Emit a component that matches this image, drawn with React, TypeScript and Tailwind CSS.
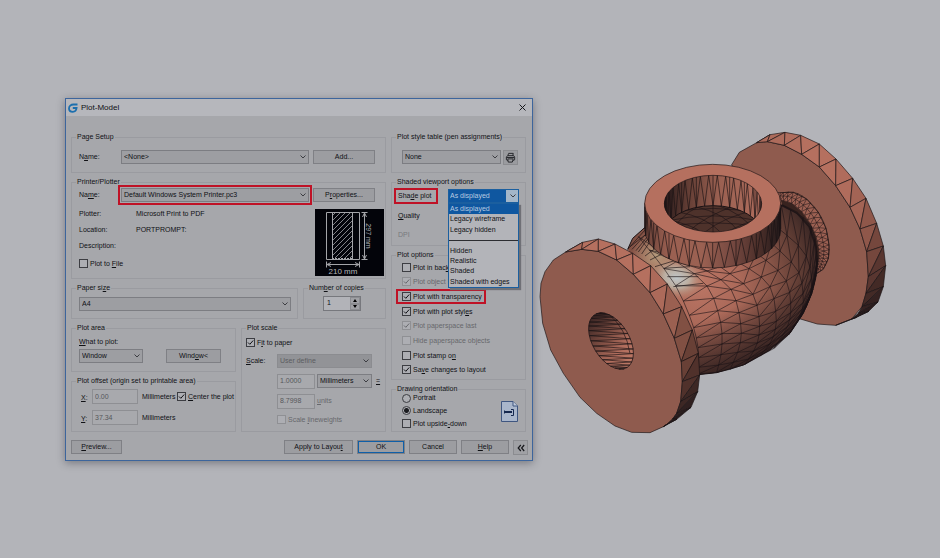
import React from 'react';

/* ---------- Text with keyboard mnemonics ---------- */

function Caption({ text }: { text: string }) {
  const at = text.indexOf('&');
  if (at < 0) return <>{text}</>;
  return (
    <>
      {text.slice(0, at)}
      <u className="underline-offset-1">{text[at + 1]}</u>
      {text.slice(at + 2)}
    </>
  );
}

/* ---------- Form controls ---------- */

function Group({ title, className = '', children }: { title: string; className?: string; children: React.ReactNode }) {
  return (
    <fieldset className={`min-w-0 border border-[#9a9ba0] ${className}`}>
      <legend className="ml-1 px-px leading-[10px]">
        <Caption text={title} />
      </legend>
      {children}
    </fieldset>
  );
}

function Chevron() {
  return (
    <svg viewBox="0 0 8 6" className="pointer-events-none absolute right-[2px] top-1 h-[6px] w-2 text-[#3c3d42]" fill="none" stroke="currentColor" strokeWidth="1">
      <path d="M1.500 1.500 4 4 6.500 1.500" />
    </svg>
  );
}

function Select({ id, label, value, className = '', disabled = false }: { id: string; label?: string; value: string; className?: string; disabled?: boolean }) {
  return (
    <span className={`relative block ${className}`}>
      <select
        id={id}
        aria-label={label}
        disabled={disabled}
        className="block h-[14px] w-full appearance-none border border-[#7c7d82] bg-[#9d9ea2] pl-[2px] pr-3 leading-3 disabled:border-[#8b8c90] disabled:bg-[#929397] disabled:text-[#5c5d61] disabled:opacity-100"
      >
        <option>{value}</option>
      </select>
      <Chevron />
    </span>
  );
}

function Button({ text, className = '' }: { text: string; className?: string }) {
  return (
    <button type="button" className={`h-[14px] shrink-0 border border-[#7f8085] bg-[#9c9da1] text-center leading-3 ${className}`}>
      <Caption text={text} />
    </button>
  );
}

function Check({ text, checked = false, disabled = false, className = '' }: { text: string; checked?: boolean; disabled?: boolean; className?: string }) {
  return (
    <label className={`flex items-center gap-[2px] whitespace-nowrap leading-[11px] ${disabled ? 'text-[#67686c]' : ''} ${className}`}>
      <span className="relative block size-[9px] shrink-0">
        <input
          type="checkbox"
          defaultChecked={checked}
          disabled={disabled}
          className={`block size-[9px] appearance-none border bg-[#adaeb3] ${disabled ? 'border-[#8f9094]' : 'border-[#3c3d42]'}`}
        />
        {checked && (
          <svg viewBox="0 0 9 9" className="pointer-events-none absolute inset-0 size-[9px]" fill="none" stroke="currentColor">
            <path d="M2 4.500 3.800 6.300 7.200 2.500" />
          </svg>
        )}
      </span>
      <span>
        <Caption text={text} />
      </span>
    </label>
  );
}

function Radio({ text, checked = false }: { text: string; checked?: boolean }) {
  return (
    <label className="flex items-center gap-[2px]">
      <input
        type="radio"
        name="orientation"
        defaultChecked={checked}
        className="size-[9px] appearance-none rounded-full border border-[#3c3d42] bg-[#adaeb3] checked:bg-[radial-gradient(circle,#1a1b1f_0_2px,#b0b1b6_3px)]"
      />
      <span>{text}</span>
    </label>
  );
}

function Field({ id, value, label, className = '' }: { id: string; value: string; label?: string; className?: string }) {
  return (
    <input
      id={id}
      aria-label={label}
      disabled
      defaultValue={value}
      className={`h-[15px] min-w-0 border border-[#8e8f93] bg-[#a8a9ad] pb-px pl-[2px] text-[#56575b] ${className}`}
    />
  );
}

/* ---------- Paper preview ---------- */

function PaperPreview() {
  return (
    <svg viewBox="0 0 69 67" className="h-[67px] w-[69px] shrink-0" role="img" aria-label="Paper preview">
      <defs>
        <clipPath id="sheet">
          <rect x="17" y="4" width="20" height="45" />
        </clipPath>
      </defs>
      <rect width="69" height="67" fill="#03040a" />
      <g fill="none" stroke="#a4a5a9" strokeWidth="1">
        <path d="M11.500 3.500H44.500V50.500H11.500ZM17.500 4V50M37.500 4V50" />
        <g clipPath="url(#sheet)">
          {Array.from({ length: 15 }, (_, i) => (
            <path key={i} d={`M16 ${8 + i * 5}L40 ${-16 + i * 5}`} strokeWidth="0.8" />
          ))}
        </g>
        <path d="M17 49.500H37" strokeDasharray="2 1" />
        <path d="M49.500 4V50M46.500 3.500H52.500M46.500 50.500H52.500M47.500 8 49.500 4 51.500 8M47.500 46 49.500 50 51.500 46" />
        <path d="M12 55.500H44M11.500 52.500V58.500M44.500 52.500V58.500M16 53.500 12 55.500 16 57.500M40 53.500 44 55.500 40 57.500" />
      </g>
      <text x="28" y="65" textAnchor="middle" fill="#b4b5b9" fontSize="8" fontFamily="Liberation Sans, sans-serif">210 mm</text>
      <text transform="translate(51 27) rotate(90)" textAnchor="middle" fill="#b4b5b9" fontSize="7" fontFamily="Liberation Sans, sans-serif">297 mm</text>
    </svg>
  );
}

/* ---------- Valve model ---------- */

type P = [number, number];

function curve(pts: P[], steps: number): P[] {
  const out: P[] = [];
  for (let s = 0; s <= steps; s++) {
    const u = (s / steps) * (pts.length - 1);
    const i = Math.min(Math.floor(u), pts.length - 2);
    const t = u - i;
    const [a, b, c, d] = [pts[Math.max(i - 1, 0)], pts[i], pts[i + 1], pts[Math.min(i + 2, pts.length - 1)]];
    const f = (k: 0 | 1) =>
      Math.round(0.5 * (2 * b[k] + (c[k] - a[k]) * t + (2 * a[k] - 5 * b[k] + 4 * c[k] - d[k]) * t * t + (3 * b[k] - a[k] - 3 * c[k] + d[k]) * t * t * t));
    out.push([f(0), f(1)]);
  }
  return out;
}

const line = (pts: P[]) => 'M' + pts.map((p) => p.join(' ')).join('L');

function lattice(rails: P[][]): string {
  let d = rails.map(line).join('');
  for (let j = 0; j < rails.length - 1; j++) {
    for (let i = 0; i < rails[j].length; i++) {
      d += line([rails[j][i], rails[j + 1][i]]);
      if (i + 1 < rails[j].length) d += line([rails[j][i + 1], rails[j + 1][i]]);
    }
  }
  return d;
}

function arc(cx: number, cy: number, rx: number, ry: number, from: number, to: number, n: number): P[] {
  return Array.from({ length: n + 1 }, (_, i) => {
    const a = ((from + ((to - from) * i) / n) * Math.PI) / 180;
    return [Math.round(cx + rx * Math.cos(a)), Math.round(cy + ry * Math.sin(a))];
  });
}

const backOuter: P[] = [[680, 68], [720, 44], [765, 37], [812, 46], [868, 72], [918, 117], [968, 175], [1008, 235], [1040, 310], [1060, 378], [1067, 437], [1060, 500], [1044, 546], [1016, 574], [980, 592]];
const backInner: P[] = [[680, 68], [712, 65], [763, 76], [815, 103], [868, 141], [917, 197], [960, 262], [990, 327], [1010, 395], [1015, 470], [1008, 520], [996, 560], [985, 580], [965, 597], [917, 616]];
const backShade = ['#ad6b5b', '#ad6b5b', '#b06d5d', '#b5705f', '#b5705f', '#b06c5c', '#a36455', '#8f574a', '#75473d', '#593630', '#432a26', '#352221', '#2b1c1c', '#281a1b'];

const frontOuter: P[] = [[107, 396], [158, 367], [205, 357], [255, 372], [308, 400], [362, 437], [412, 492], [455, 560], [487, 630], [505, 700], [509, 765], [503, 815], [483, 862], [440, 898], [400, 920]];
const frontInner: P[] = [[107, 396], [155, 388], [205, 394], [260, 420], [310, 463], [360, 518], [400, 582], [433, 655], [454, 725], [457, 785], [452, 845], [440, 880], [428, 897], [412, 912], [400, 920]];
const frontShade = ['#ad6b5b', '#b5705f', '#b5705f', '#b5705f', '#b5705f', '#ac6a5a', '#9b6051', '#815043', '#684036', '#50312b', '#3d2724', '#302020', '#291b1c', '#261a1a'];

function Rim({ outer, inner, shade }: { outer: P[]; inner: P[]; shade: string[] }) {
  return (
    <g stroke="#1b1315" strokeWidth="2" strokeLinejoin="round">
      {shade.map((c, i) => (
        <g key={i} fill={c}>
          <path d={line([outer[i], outer[i + 1], inner[i]]) + 'Z'} />
          <path d={line([inner[i], outer[i + 1], inner[i + 1]]) + 'Z'} />
        </g>
      ))}
    </g>
  );
}

const bodyRails: P[][] = (
  [
    [[325, 350], [430, 485], [485, 605], [505, 690], [505, 762]],
    [[400, 400], [524, 489], [568, 590], [576, 680], [560, 757]],
    [[500, 436], [597, 500], [630, 595], [630, 675], [600, 748]],
    [[570, 440], [664, 515], [688, 605], [680, 675], [645, 733]],
    [[630, 430], [715, 492], [738, 590], [728, 655], [690, 708]],
    [[680, 400], [765, 475], [782, 565], [770, 625], [732, 685]],
    [[725, 370], [803, 450], [820, 535], [808, 590], [775, 645]],
    [[745, 325], [825, 400], [845, 490], [835, 545], [812, 592]],
    [[754, 255], [840, 312], [861, 410], [857, 470], [845, 522]],
  ] as P[][]
).map((r) => curve(r, 11));

const neckRails: P[][] = (
  [
    [[750, 219], [790, 217], [830, 237], [865, 277], [888, 325], [897, 375], [895, 415], [880, 445], [858, 462]],
    [[751, 228], [785, 232], [820, 255], [852, 293], [872, 338], [881, 380], [880, 415], [870, 440], [857, 458]],
    [[752, 240], [785, 250], [815, 275], [841, 312], [858, 350], [866, 388], [867, 415], [862, 438], [856, 455]],
  ] as P[][]
).map((r) => curve(r, 24));

function Valve() {
  const skirtTop = arc(548, 250, 204, 117, 180, 0, 36);
  const skirtLow = arc(548, 327, 204, 117, 180, 0, 36);
  const boreTop = arc(549, 251, 146, 85, 180, 360, 36);
  const boreLow = arc(549, 342, 146, 85, 180, 360, 36);
  const left = arc(0, 0, 93, 55, 20, 200, 34);
  const right = arc(0, 0, 93, 55, 20, -160, 34);
  const zig = (a: P[], b: P[]) => line(a.map((p, i) => (i % 2 ? p : b[i])));
  return (
    <svg viewBox="9 0 1101 990" className="mr-10 mt-[22px] min-w-0 flex-1" role="img" aria-label="Shaded model of a flanged valve body">
      <defs>
        <radialGradient id="body" gradientUnits="userSpaceOnUse" cx="510" cy="490" r="400">
          <stop offset="0" stopColor="#bb7665" />
          <stop offset="0.300" stopColor="#ab6959" />
          <stop offset="0.550" stopColor="#875447" />
          <stop offset="0.780" stopColor="#5b3a32" />
          <stop offset="1" stopColor="#2a1d1e" />
        </radialGradient>
        <linearGradient id="under" gradientUnits="userSpaceOnUse" x1="590" y1="570" x2="670" y2="760">
          <stop offset="0" stopColor="#1c1315" stopOpacity="0" />
          <stop offset="1" stopColor="#1c1315" stopOpacity="0.850" />
        </linearGradient>
        <radialGradient id="shine" gradientUnits="userSpaceOnUse" cx="0" cy="0" r="1" gradientTransform="translate(440 474) rotate(10) scale(84 62)">
          <stop offset="0" stopColor="#c0c6ca" />
          <stop offset="0.450" stopColor="#bdb5a8" stopOpacity="0.900" />
          <stop offset="1" stopColor="#b58a72" stopOpacity="0" />
        </radialGradient>
        <radialGradient id="shoulder" gradientUnits="userSpaceOnUse" cx="380" cy="405" r="75">
          <stop offset="0" stopColor="#b49a7b" />
          <stop offset="1" stopColor="#b49a7b" stopOpacity="0" />
        </radialGradient>
        <linearGradient id="skirt">
          <stop offset="0" stopColor="#6b4239" />
          <stop offset="0.180" stopColor="#9b6051" />
          <stop offset="0.420" stopColor="#9b6152" />
          <stop offset="0.650" stopColor="#754840" />
          <stop offset="0.850" stopColor="#4a2e29" />
          <stop offset="1" stopColor="#241a1b" />
        </linearGradient>
        <linearGradient id="bore">
          <stop offset="0" stopColor="#2a1b1b" />
          <stop offset="0.250" stopColor="#643e35" />
          <stop offset="0.550" stopColor="#9a6051" />
          <stop offset="1" stopColor="#b06d5d" />
        </linearGradient>
        <linearGradient id="hole" x1="0" y1="0.600" x2="1" y2="0.400">
          <stop offset="0" stopColor="#3a2523" />
          <stop offset="0.400" stopColor="#7d4d42" />
          <stop offset="0.700" stopColor="#b06d5d" />
          <stop offset="1" stopColor="#bd7966" />
        </linearGradient>
        <clipPath id="boreClip">
          <ellipse cx="549" cy="251" rx="146" ry="85" />
        </clipPath>
        <clipPath id="boreFloor">
          <ellipse cx="549" cy="342" rx="146" ry="85" />
        </clipPath>
      </defs>

      {/* rear flange */}
      <path d="M605 134 628 97 680 68 712 65 763 76 815 103 868 141 917 197 960 262 990 327 1010 395 1015 470 1008 520 996 560 965 597 917 616 862 612 808 596 700 400Z" fill="#8f5b4e" stroke="#1b1315" strokeWidth="2" />
      <Rim outer={backOuter} inner={backInner} shade={backShade} />

      {/* neck */}
      <path d="M740 218 790 217 830 237 865 277 888 325 897 375 895 415 880 448 855 464 780 400Z" fill="#9c6052" stroke="#1b1315" strokeWidth="2" />
      <path d="M752 240 785 250 815 275 841 312 858 350 866 388 867 415 862 438 856 455 800 400Z" fill="#38231f" />
      <path d={lattice(neckRails)} fill="none" stroke="#1b1315" strokeWidth="1.600" />

      {/* body */}
      <g>
        {['url(#body)', 'url(#under)', 'url(#shoulder)', 'url(#shine)'].map((f) => (
          <path
            key={f}
            d="M293 388 308 355 345 322 400 300 752 255 800 275 840 312 856 365 861 415 857 475 845 522 820 580 780 640 720 690 640 735 560 758 505 764 470 760 430 620 340 470Z"
            fill={f}
          />
        ))}
        <path d="M293 388 308 355 345 322M861 415 857 475 845 522 820 580 780 640 720 690 640 735 560 758 505 764" fill="none" stroke="#1b1315" strokeWidth="3" />
        <path d="M293 388 345 330M306 388 350 340M318 392 352 350M335 402 362 362M345 408 385 378M360 420 410 395M375 440 440 420M345 345 300 380M352 358 325 396M400 445 480 440M412 470 505 470M430 500 520 490" stroke="#1b1315" strokeWidth="2" />
        <path d={lattice(bodyRails)} fill="none" stroke="#1b1315" strokeWidth="1.800" />
        <path d="M754 255 800 278 838 320 858 380 861 430 856 470" fill="none" stroke="#1b1315" strokeWidth="6" strokeOpacity="0.800" />
      </g>

      {/* top ring */}
      <path d="M344 250V327A204 117 0 0 0 752 327V250Z" fill="url(#skirt)" stroke="#1b1315" strokeWidth="2" />
      <path d={zig(skirtTop, skirtLow) + skirtTop.filter((_, i) => i % 4 === 2).map(([x, y]) => `M${x} ${y}V${y + 77}`).join('')} fill="none" stroke="#1b1315" strokeWidth="2" />
      <ellipse cx="548" cy="250" rx="204" ry="117" fill="#b5705f" stroke="#1b1315" strokeWidth="2" />
      <g clipPath="url(#boreClip)">
        <rect x="400" y="160" width="300" height="180" fill="url(#bore)" />
        <path d={zig(boreTop, boreLow) + boreTop.filter((_, i) => i % 4 === 2).map(([x, y]) => `M${x} ${y}V${y + 91}`).join('')} fill="none" stroke="#1b1315" strokeWidth="2" />
        <ellipse cx="549" cy="342" rx="146" ry="85" fill="#4e322b" stroke="#1b1315" strokeWidth="3" />
        <g clipPath="url(#boreFloor)" stroke="#1b1315" strokeWidth="1.800" fill="none">
          <path d="M400 285Q549 245 700 285M400 305Q549 270 700 305M400 322Q549 295 700 322M420 340Q470 260 540 250M470 340Q520 290 620 255M520 340Q580 290 680 270M580 340Q640 310 700 290M680 340Q640 280 560 255M630 340Q590 280 490 258M575 340Q530 290 440 275M520 340Q480 310 410 300M549 255V340" />
        </g>
      </g>
      <ellipse cx="549" cy="251" rx="146" ry="85" fill="none" stroke="#1b1315" strokeWidth="2" />

      {/* front flange */}
      <path d={line(frontInner) + 'L360 938 305 937 255 918 200 880 150 832 100 760 62 690 38 610 30 530 33 490 45 455 70 420Z'} fill="#8f5b4e" stroke="#1b1315" strokeWidth="2" />
      <Rim outer={frontOuter} inner={frontInner} shade={frontShade} />
      <ellipse cx="243" cy="663" rx="93" ry="55" transform="rotate(59 243 663)" fill="url(#hole)" stroke="#1b1315" strokeWidth="2" />
      <g transform="translate(243 663) rotate(59)" fill="none" stroke="#1b1315" strokeWidth="1.800">
        <path d={zig(left, right)} />
        <path d="M-70 -36Q-10 -58 60 -30" />
      </g>
    </svg>
  );
}

/* ---------- Dialog ---------- */

const shadeModes = ['As displayed', 'Legacy wireframe', 'Legacy hidden', '', 'Hidden', 'Realistic', 'Shaded', 'Shaded with edges'];

function TitleBar() {
  return (
    <header className="flex h-[17px] items-center bg-[#b6b7bc] pl-[2px] pr-[6px]">
      <svg viewBox="0 0 10 10" className="size-[10px]" fill="none" stroke="#1b6fae" strokeWidth="1.800">
        <path d="M9.500 1.500H5.500C2.800 1.500 1 3.300 1 5.500S2.800 8.800 4.800 8.800C7 8.800 8.300 7.300 8.600 5H4.800" />
      </svg>
      <h1 className="ml-[3px] flex-1 text-[8px] leading-[10px]">Plot-Model</h1>
      <button type="button" aria-label="Close" className="size-[7px]">
        <svg viewBox="0 0 7 7" className="size-[7px]" fill="none" stroke="#17181c" strokeWidth="1">
          <path d="M0.500 0.500 6.500 6.500M6.500 0.500 0.500 6.500" />
        </svg>
      </button>
    </header>
  );
}

function LeftColumn() {
  return (
    <div className="flex flex-col gap-1">
      <Group title="Page Setup" className="h-[41px]">
        <div className="flex items-center gap-1 pl-[7px] pr-[10px] pt-2">
          <label htmlFor="setup" className="w-[38px]"><Caption text="N&ame:" /></label>
          <Select id="setup" value="<None>" className="flex-1" />
          <Button text="Add..." className="w-[62px]" />
        </div>
      </Group>

      <Group title="Printer/Plotter" className="h-[102px]">
        <div className="flex items-center gap-1 pl-[7px] pr-[10px] pt-px">
          <label htmlFor="printer" className="w-[38px]"><Caption text="Na&me:" /></label>
          <Select id="printer" value="Default Windows System Printer.pc3" className="flex-1 outline-2 outline-offset-1 outline-[#bf1226]" />
          <Button text="P&roperties..." className="w-[62px]" />
        </div>
        <div className="flex justify-between pl-[7px] pr-px">
          <div className="pt-1">
            <dl className="grid grid-cols-[57px_auto] leading-4">
              <dt>Plotter:</dt>
              <dd>Microsoft Print to PDF</dd>
              <dt>Location:</dt>
              <dd>PORTPROMPT:</dd>
              <dt>Description:</dt>
              <dd />
            </dl>
            <Check text="Plot to &File" className="mt-1" />
          </div>
          <div className="pt-[7px]">
            <PaperPreview />
          </div>
        </div>
      </Group>

      <div className="flex gap-[5px]">
        <Group title="Paper si&ze" className="h-9 flex-1">
          <div className="pl-[7px] pr-[6px] pt-1">
            <Select id="paper" label="Paper size" value="A4" />
          </div>
        </Group>
        <Group title="Num&ber of copies" className="h-9 w-[83px]">
          <div className="ml-[19px] mt-[3px] flex h-[15px] w-[38px] border border-[#77787d] bg-[#b2b3b8]">
            <input aria-label="Number of copies" defaultValue="1" className="min-w-0 flex-1 pb-px pl-[3px]" />
            <span className="flex w-[10px] flex-col bg-[#a0a1a5]">
              <button type="button" aria-label="More copies" className="flex flex-1 items-center justify-center border border-[#8b8c90]">
                <svg viewBox="0 0 4 3" className="h-[3px] w-1"><path d="M0 3 2 0 4 3Z" /></svg>
              </button>
              <button type="button" aria-label="Fewer copies" className="flex flex-1 items-center justify-center border border-[#8b8c90]">
                <svg viewBox="0 0 4 3" className="h-[3px] w-1"><path d="M0 0 2 3 4 0Z" /></svg>
              </button>
            </span>
          </div>
        </Group>
      </div>

      <div className="flex gap-[5px]">
        <div className="flex min-w-0 flex-1 flex-col gap-1">
          <Group title="Plot area" className="h-[49px]">
            <div className="pl-[7px] pt-1">
              <label htmlFor="area" className="block leading-[10px]"><Caption text="&What to plot:" /></label>
              <div className="mt-[2px] flex gap-[23px]">
                <Select id="area" value="Window" className="w-16" />
                <Button text="Wind&ow<" className="w-[55px]" />
              </div>
            </div>
          </Group>
          <Group title="Plot offset (origin set to printable area)" className="h-14">
            <div className="flex flex-col gap-[6px] pl-[9px] pt-[3px]">
              <div className="flex items-center">
                <label htmlFor="offx" className="w-[11px] shrink-0 pt-[2px]"><Caption text="&X:" /></label>
                <Field id="offx" value="0.00" className="w-[46px] shrink-0" />
                <span className="ml-1 w-[35px] shrink-0">Millimeters</span>
                <Check text="&Center the plot" checked />
              </div>
              <div className="flex items-center">
                <label htmlFor="offy" className="w-[11px] shrink-0 pt-[2px]"><Caption text="&Y:" /></label>
                <Field id="offy" value="37.34" className="w-[46px] shrink-0" />
                <span className="ml-1">Millimeters</span>
              </div>
            </div>
          </Group>
        </div>

        <Group title="Plot scale" className="w-[145px]">
          <div className="flex flex-col gap-[6px] pl-1 pr-[13px] pt-1">
            <Check text="F&it to paper" checked />
            <div className="flex items-center">
              <label htmlFor="scale" className="w-[31px]"><Caption text="&Scale:" /></label>
              <Select id="scale" value="User define" disabled className="flex-1" />
            </div>
            <div className="-mr-2 flex h-[14px] items-center pl-[31px]">
              <Field id="paperUnits" label="Paper units" value="1.0000" className="w-[38px]" />
              <Select id="units" label="Units" value="Millimeters" className="ml-[2px] flex-1" />
              <span className="w-2 pl-1 text-right underline">=</span>
            </div>
            <div className="flex h-[14px] items-center pl-[31px] text-[#67686c]">
              <Field id="drawingUnits" value="8.7998" className="w-[38px]" />
              <label htmlFor="drawingUnits" className="ml-[2px]"><Caption text="&units" /></label>
            </div>
            <Check text="Scale &lineweights" disabled className="pl-[31px]" />
          </div>
        </Group>
      </div>
    </div>
  );
}

function RightColumn() {
  return (
    <div className="flex flex-col gap-1">
      <Group title="Plot style table (pen assignments)" className="h-[41px]">
        <div className="flex gap-[2px] pl-[10px] pr-[7px] pt-2">
          <Select id="style" label="Plot style table" value="None" className="flex-1" />
          <button type="button" aria-label="Edit plot style" className="flex size-[15px] items-center justify-center border border-[#8b8c90] bg-[#9a9b9f]">
            <svg viewBox="0 0 12 12" className="size-[11px]" fill="none" stroke="#1f2024">
              <path d="M3 4 4 1.500H9L8.500 4M1.500 8.500V5.500L3 4H9.500L10.500 5.500V8.500L9 9.500M1.500 8.500 3 9.500M3 7.500H9L8 11H3.500ZM2 6H10" />
            </svg>
          </button>
        </div>
      </Group>

      <Group title="Shaded viewport options" className="h-[69px]">
        <div className="flex justify-between pl-[6px] pr-[6px] pt-[2px]">
          <div>
            <label htmlFor="shade" className="-ml-[3px] block h-[14px] w-[42px] pl-[3px] leading-[14px] outline-2 -outline-offset-1 outline-[#bf1226]">
              <Caption text="Sha&de plot" />
            </label>
            <p className="mt-[6px] leading-[14px]"><Caption text="&Quality" /></p>
            <p className="mt-[6px] leading-[12px] text-[#78797d]">DPI</p>
          </div>
          <div className="relative z-10 h-[14px] w-[71px]">
            <select id="shade" className="block h-[14px] w-full appearance-none border border-[#1b5f9f] bg-[linear-gradient(90deg,#0f57a0_57px,#a3b6c9_57px)] pl-px leading-3 text-[#b9cbe0]">
              <option>As displayed</option>
            </select>
            <Chevron />
            <ul role="listbox" aria-label="Shade plot" className="absolute left-0 top-[14px] grid h-[85px] w-[71px] grid-rows-8 border border-[#1b5f9f] bg-[#b3b4b9] shadow-[2px_2px_1px_#6f7076]">
              {shadeModes.map((m, i) =>
                m ? (
                  <li key={m} role="option" aria-selected={i === 0} className={`min-h-0 pl-px leading-[10px] ${i === 0 ? 'bg-[#0f57a0] text-[#b9cbe0]' : ''}`}>
                    {m}
                  </li>
                ) : (
                  <li key="rule" role="separator" className="my-[5px] min-h-0 border-t border-[#2c2d31]" />
                ),
              )}
            </ul>
          </div>
        </div>
      </Group>

      <Group title="Plot options" className="h-[130px]">
        <div className="grid h-[117px] grid-rows-8 items-center justify-items-start pl-[10px]">
          <Check text="Plot in bac&kground" />
          <Check text="Plot object lineweights" checked disabled />
          <Check text="Plot with transparency" checked className="-ml-1 h-[11px] pl-1 pr-[2px] outline-2 outline-[#bf1226]" />
          <Check text="Plot with plot styl&es" checked />
          <Check text="Plot paperspace last" checked disabled />
          <Check text="Hide paperspace objects" disabled />
          <Check text="Plot stamp o&n" />
          <Check text="Sa&ve changes to layout" checked />
        </div>
      </Group>

      <Group title="Drawing orientation" className="h-12">
        <div className="-mt-[2px] flex items-center justify-between pl-[10px] pr-[7px]">
          <div className="grid h-[38px] grid-rows-3 items-center">
            <Radio text="Portrait" />
            <Radio text="Landscape" checked />
            <Check text="Plot upside&-down" />
          </div>
          <svg viewBox="0 0 17 21" className="h-[21px] w-[17px]" role="img" aria-label="Landscape sheet">
            <path d="M0.500 0.500H12L16.500 5V20.500H0.500Z" fill="#a9b6cb" stroke="#3f5680" />
            <path d="M12 0.500V5H16.500" fill="#c0cadb" stroke="#3f5680" />
            <path d="M3 9.500H4V12.500H3ZM4 10H11V12H4Z" fill="#15284f" />
            <path d="M10 8.500H12.500V14.500H10" fill="none" stroke="#15284f" />
          </svg>
        </div>
      </Group>
    </div>
  );
}

export default function App() {
  return (
    <main className="flex min-h-screen items-start bg-[#b3b4b9] pl-[65px] pt-[98px]">
      <form
        aria-label="Plot-Model"
        className="w-[468px] shrink-0 border border-[#3d659c] bg-[#a6a7ab] font-['Liberation_Sans',sans-serif] text-[7px] leading-[10px] text-[#101115] shadow-[0_2px_8px_rgba(30,32,45,0.4)]"
      >
        <TitleBar />
        <div className="grid grid-cols-[minmax(0,7fr)_minmax(0,3fr)] gap-[5px] pl-[5px] pr-[6px] pt-4">
          <LeftColumn />
          <RightColumn />
        </div>
        <footer className="flex gap-1 pb-[5px] pl-[5px] pr-1 pt-2">
          <Button text="&Preview..." className="mr-auto w-[51px]" />
          <Button text="Apply to Layou&t" className="w-[69px]" />
          <Button text="OK" className="w-12 border-[#0f5fa8] outline-1 -outline-offset-2 outline-[#0f5fa8]" />
          <Button text="Cancel" className="w-12" />
          <Button text="&Help" className="w-12" />
          <button type="button" aria-label="Show fewer options" className="flex size-[15px] items-center justify-center border border-[#8b8c90] bg-[#a0a1a5]">
            <svg viewBox="0 0 8 8" className="size-2" fill="none" stroke="#17181c" strokeWidth="1.200">
              <path d="M3.800 1 1.200 4 3.800 7M7.200 1 4.600 4 7.200 7" />
            </svg>
          </button>
        </footer>
      </form>
      <Valve />
    </main>
  );
}
